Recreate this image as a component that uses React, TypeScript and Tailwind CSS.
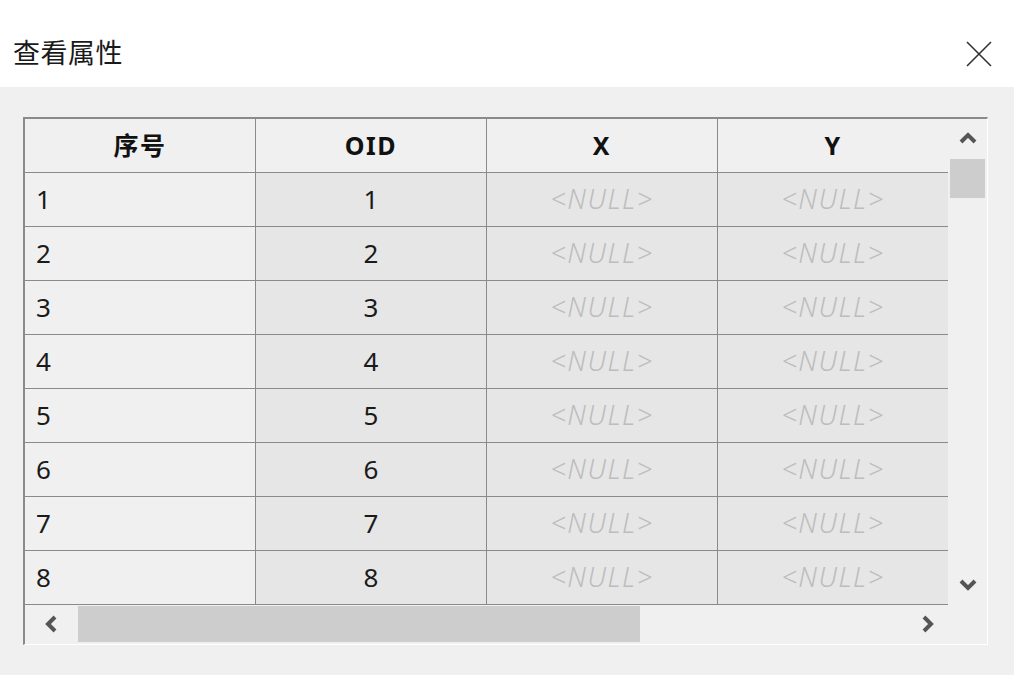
import React from 'react';

const rows = [1, 2, 3, 4, 5, 6, 7, 8];
const font = { fontFamily: '"Segoe UI", "Noto Sans", "Noto Sans CJK SC", sans-serif' };

function Chevron({ dir }: { dir: 'up' | 'down' | 'left' | 'right' }) {
  const d = {
    up: 'M2 12 L9 5 L16 12',
    down: 'M2 6 L9 13 L16 6',
    left: 'M12 2 L5 9 L12 16',
    right: 'M6 2 L13 9 L6 16',
  }[dir];
  return (
    <svg width="18" height="18" viewBox="0 0 18 18">
      <path d={d} fill="none" stroke="#555" strokeWidth="4" />
    </svg>
  );
}

export default function App() {
  return (
    <div className="w-[1020px] h-[690px] bg-white flex flex-col" style={font}>
      <div className="h-[87px] flex items-center justify-between pl-[13px] pr-[28px] pt-[20px]">
        <span className="text-[27px] tracking-[0.5px] text-[#1a1a1a]">查看属性</span>
        <svg width="26" height="26" viewBox="0 0 26 26">
          <path d="M1 1 L25 25 M25 1 L1 25" stroke="#333" strokeWidth="1.6" />
        </svg>
      </div>

      <div className="w-[1014px] h-[588px] bg-[#f0f0f0] pl-[23px] pt-[30px]">
        <div className="w-[965px] h-[528px] border-t-2 border-l-2 border-[#8a8a8a] border-r border-b border-r-white border-b-white flex flex-col">
          <div className="flex">
            <div className="flex flex-col">
              <div className="flex h-[54px]">
                {['序号', 'OID', 'X', 'Y'].map((h, i) => (
                  <div
                    key={h}
                    className={`${i === 3 ? 'w-[230px]' : 'w-[231px] border-r'} border-b border-[#8a8a8a] bg-[#f0f0f0] flex items-center justify-center text-[25px] tracking-[1.5px] font-bold text-[#111]`}
                  >
                    {h}
                  </div>
                ))}
              </div>
              {rows.map((n) => (
                <div key={n} className="flex h-[54px] text-[26px]">
                  <div className="w-[231px] border-r border-b border-[#8a8a8a] bg-[#f0f0f0] flex items-center pl-[11px] text-[#1a1a1a]">{n}</div>
                  <div className="w-[231px] border-r border-b border-[#8a8a8a] bg-[#e6e6e6] flex items-center justify-center text-[#1a1a1a]">{n}</div>
                  <div className="w-[231px] border-r border-b border-[#8a8a8a] bg-[#e6e6e6] flex items-center justify-center italic font-light text-[27px] tracking-[1.5px] text-[#bdbdbd]">&lt;NULL&gt;</div>
                  <div className="w-[230px] border-b border-[#8a8a8a] bg-[#e6e6e6] flex items-center justify-center italic font-light text-[27px] tracking-[1.5px] text-[#bdbdbd]">&lt;NULL&gt;</div>
                </div>
              ))}
            </div>
            <div className="w-[40px] flex flex-col items-center bg-[#f0f0f0]">
              <div className="h-[40px] w-full flex items-center justify-center"><Chevron dir="up" /></div>
              <div className="w-[35px] h-[39px] bg-[#cdcdcd]" />
              <div className="flex-1" />
              <div className="h-[42px] w-full flex items-center justify-center"><Chevron dir="down" /></div>
            </div>
          </div>
          <div className="h-[38px] flex items-center bg-[#f0f0f0]">
            <div className="w-[53px] flex justify-center"><Chevron dir="left" /></div>
            <div className="w-[562px] h-[36px] bg-[#cdcdcd]" />
            <div className="flex-1" />
            <div className="w-[40px] flex justify-center mr-[40px]"><Chevron dir="right" /></div>
          </div>
        </div>
      </div>
    </div>
  );
}
